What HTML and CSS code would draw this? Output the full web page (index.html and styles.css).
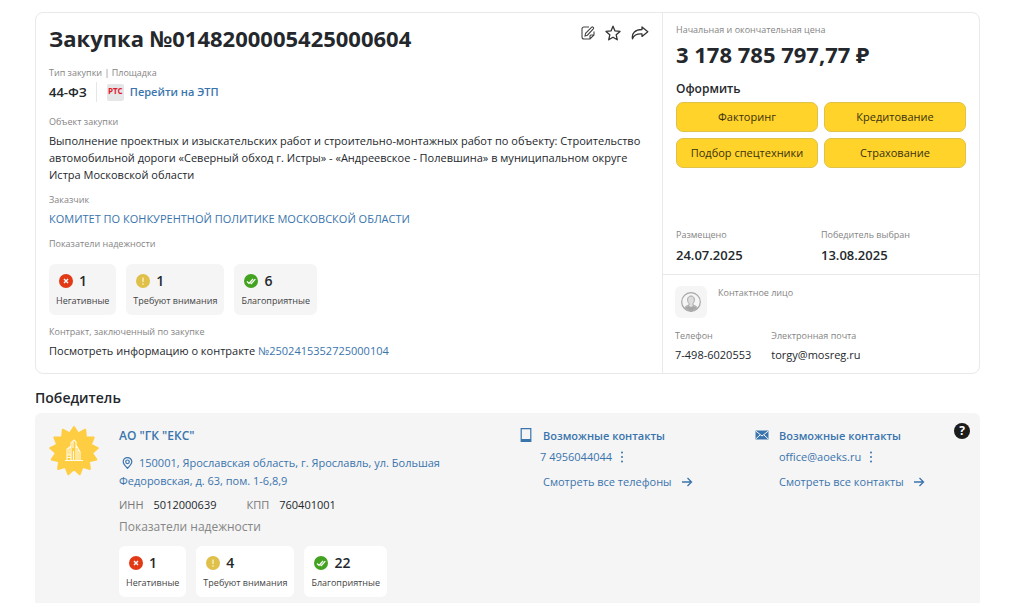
FILE: index.html
```html
<!DOCTYPE html>
<html lang="ru">
<head>
<meta charset="utf-8">
<meta name="viewport" content="width=device-width, initial-scale=1">
<title>Закупка №0148200005425000604</title>
<link rel="stylesheet" href="styles.css">
</head>
<body>
<svg class="sprite" aria-hidden="true">
  <symbol id="bad" viewBox="0 0 14 14"><circle cx="7" cy="7" r="7" fill="#e23a17"/><path d="M5 5l4 4M9 5l-4 4" stroke="#fff" stroke-width="1.4"/></symbol>
  <symbol id="warn" viewBox="0 0 14 14"><circle cx="7" cy="7" r="7" fill="#dfc04a"/><path d="M7 3.500v4.500M7 9.300v1.500" stroke="#fff3c4" stroke-width="1.300"/></symbol>
  <symbol id="good" viewBox="0 0 14 14"><circle cx="7" cy="7" r="7" fill="#43a320"/><path d="M3 7.500l2 2 4-4.500M6.500 9l.8.600 4-4.500" fill="none" stroke="#fff" stroke-width="1.200"/></symbol>
  <symbol id="arrow" viewBox="0 0 12 10"><path d="M1 5h9.500M6.500 1l4 4-4 4" fill="none" stroke="currentColor" stroke-width="1.300"/></symbol>
  <symbol id="dots" viewBox="0 0 4 12"><circle cx="2" cy="1.500" r="1"/><circle cx="2" cy="6" r="1"/><circle cx="2" cy="10.500" r="1"/></symbol>
</svg>
<main class="page">
  <section class="card">
    <div class="purchase">
      <header class="head">
        <h1 class="title">Закупка №0148200005425000604</h1>
        <div class="actions">
          <button class="icon-btn" type="button" aria-label="Заметка"><svg width="14" height="14" viewBox="0 0 14 14" fill="none" stroke="#444" stroke-width="1.100"><path d="M8 1H3Q1 1 1 3v8q0 2 2 2h6l4-4V5.500M9 13v-3q0-1 1-1h3"/><path d="M4 10l.600-2.700L10.700 1.200q.7-.6 1.500.1t.1 1.500L6.400 9.200z"/></svg></button>
          <button class="icon-btn" type="button" aria-label="В избранное"><svg width="16" height="16" viewBox="0 0 16 16" fill="none" stroke="#333" stroke-width="1.300" stroke-linejoin="round"><path d="M8 1.200l2 4.700 5 .5-3.800 3.400 1.100 5L8 12.200l-4.300 2.600 1.100-5L1 6.400l5-.5z"/></svg></button>
          <button class="icon-btn" type="button" aria-label="Поделиться"><svg width="18" height="14" viewBox="0 0 18 14" fill="none" stroke="#333" stroke-width="1.300" stroke-linejoin="round"><path d="M11 1l5.800 4.700L11 10.400V8C6 7.700 3 8.800 1.500 12.800 .4 7 4.500 3.600 11 3.500z"/></svg></button>
        </div>
      </header>
      <p class="label type-label">Тип закупки | Площадка</p>
      <div class="type">
        <strong class="law">44-ФЗ</strong>
        <span class="rts">РТС</span>
        <a class="etp" href="#">Перейти на ЭТП</a>
      </div>
      <p class="label object-label">Объект закупки</p>
      <p class="object">Выполнение проектных и изыскательских работ и строительно-монтажных работ по объекту: Строительство автомобильной дороги «Северный обход г. Истры» - «Андреевское - Полевшина» в муниципальном округе Истра Московской области</p>
      <p class="label customer-label">Заказчик</p>
      <a class="value" href="#">КОМИТЕТ ПО КОНКУРЕНТНОЙ ПОЛИТИКЕ МОСКОВСКОЙ ОБЛАСТИ</a>
      <p class="label rating-label">Показатели надежности</p>
      <div class="tiles">
        <div class="tile"><span class="count"><svg class="mark"><use href="#bad"/></svg>1</span><span class="caption">Негативные</span></div>
        <div class="tile"><span class="count"><svg class="mark"><use href="#warn"/></svg>1</span><span class="caption">Требуют внимания</span></div>
        <div class="tile"><span class="count"><svg class="mark"><use href="#good"/></svg>6</span><span class="caption">Благоприятные</span></div>
      </div>
      <p class="label contract-label">Контракт, заключенный по закупке</p>
      <p class="value">Посмотреть информацию о контракте <a href="#">№2502415352725000104</a></p>
    </div>
    <aside class="side">
      <div class="offer">
        <p class="label">Начальная и окончательная цена</p>
        <p class="price">3 178 785 797,77 ₽</p>
        <h2 class="subtitle">Оформить</h2>
        <div class="services">
          <button class="service" type="button">Факторинг</button>
          <button class="service" type="button">Кредитование</button>
          <button class="service" type="button">Подбор спецтехники</button>
          <button class="service" type="button">Страхование</button>
        </div>
        <div class="dates">
          <div><p class="label">Размещено</p><p class="date">24.07.2025</p></div>
          <div><p class="label">Победитель выбран</p><p class="date">13.08.2025</p></div>
        </div>
      </div>
      <div class="contact">
        <div class="person">
          <span class="avatar"><svg width="20" height="20" viewBox="0 0 20 20"><circle cx="10" cy="10" r="9.300" fill="none" stroke="#a6a6a6" stroke-width="1.200"/><path d="M3.500 16Q4 14 8 13.200V11.500C6 9.500 5.800 4 10 4s4 5.500 2 7.500v1.700q4 .8 4.500 2.800-6.500 5.500-13 0z" fill="#ddd" stroke="#a6a6a6"/><path d="M4 16q1-1.500 4-2l2 1 2-1q3 .5 4 2-6 4.800-12 0z" fill="#a6a6a6"/></svg></span>
          <p class="label">Контактное лицо</p>
        </div>
        <div class="channels">
          <div><p class="label">Телефон</p><p class="value">7-498-6020553</p></div>
          <div><p class="label">Электронная почта</p><p class="value">torgy@mosreg.ru</p></div>
        </div>
      </div>
    </aside>
  </section>

  <h2 class="section-title">Победитель</h2>
  <section class="winner">
    <svg class="badge" viewBox="-25 -25 50 50" aria-hidden="true">
      <path fill="#ffcd42" stroke="#ffcd42" stroke-width="2" stroke-linejoin="round" d="M0-24L4.300-17.500 11.200-21.300 11.900-13.600 19.700-13.600 16.800-6.400 23.800-2.900 17.900 2.200 22.400 8.500 14.900 10.300 15.900 18 8.500 15.900 5.700 23.300 0 18-5.700 23.300-8.500 15.900-15.900 18-14.900 10.300-22.400 8.500-17.900 2.200-23.800-2.900-16.800-6.400-19.700-13.600-11.900-13.600-11.200-21.300-4.300-17.500z"/>
      <path fill="none" stroke="#fffbe8" stroke-width="1.100" d="M-9 9.500H9M-7 9V-2L-3-5V9M-5-3V4M-3-5V-8L0-11 2-9V9M-1-9V-3M-.5 0V9M2-6L6 1V9M4-2V9M-7 4H-3M-7 6.500H-3"/>
    </svg>
    <div class="company">
      <a class="name" href="#">АО "ГК "ЕКС"</a>
      <a class="address" href="#"><svg class="pin" viewBox="0 0 10 12" fill="none" stroke="currentColor" stroke-width="1.200"><path d="M5 11.300C3 9 .7 7 .7 4.700a4.300 4.100 0 0 1 8.600 0C9.300 7 7 9 5 11.300z"/><circle cx="5" cy="4.800" r="1.800"/></svg>150001, Ярославская область, г. Ярославль, ул. Большая Федоровская, д. 63, пом. 1-6,8,9</a>
      <dl class="codes">
        <div class="code"><dt>ИНН</dt><dd>5012000639</dd></div>
        <div class="code"><dt>КПП</dt><dd>760401001</dd></div>
      </dl>
      <p class="rating-title">Показатели надежности</p>
      <div class="tiles tiles-white">
        <div class="tile"><span class="count"><svg class="mark"><use href="#bad"/></svg>1</span><span class="caption">Негативные</span></div>
        <div class="tile"><span class="count"><svg class="mark"><use href="#warn"/></svg>4</span><span class="caption">Требуют внимания</span></div>
        <div class="tile"><span class="count"><svg class="mark"><use href="#good"/></svg>22</span><span class="caption">Благоприятные</span></div>
      </div>
    </div>
    <div class="reach">
      <svg class="reach-icon" viewBox="0 0 14 14"><path d="M2.200.7h9.600v12.600H2.200z" fill="none" stroke="currentColor" stroke-width="1.200"/><path d="M2 11h10v2.200H2z" fill="currentColor"/></svg>
      <div class="reach-body">
        <h3 class="reach-title">Возможные контакты</h3>
        <p class="reach-value phone"><a href="#">7 4956044044</a><button class="more" type="button" aria-label="Ещё"><svg><use href="#dots"/></svg></button></p>
        <a class="reach-all" href="#">Смотреть все телефоны<svg class="arrow"><use href="#arrow"/></svg></a>
      </div>
    </div>
    <div class="reach">
      <svg class="reach-icon" viewBox="0 0 14 14"><path d="M.5 2.500h13v9H.5z" fill="currentColor"/><path d="M.7 3l6.300 5 6.300-5M.7 11l4.300-4M13.300 11L9 7" fill="none" stroke="#f5f5f5"/></svg>
      <div class="reach-body">
        <h3 class="reach-title">Возможные контакты</h3>
        <p class="reach-value"><a href="#">office@aoeks.ru</a><button class="more" type="button" aria-label="Ещё"><svg><use href="#dots"/></svg></button></p>
        <a class="reach-all" href="#">Смотреть все контакты<svg class="arrow"><use href="#arrow"/></svg></a>
      </div>
    </div>
    <button class="help" type="button" aria-label="Справка">?</button>
  </section>
</main>
</body>
</html>
```

FILE: styles.css
```css
* { box-sizing: border-box; }
body {
  margin: 0;
  background: #fff;
  color: #24282c;
  font: 11px/18px "Open Sans", "Noto Sans", sans-serif;
}
h1, h2, h3, p, dl, dd { margin: 0; }
a { color: #3a74ad; text-decoration: none; }
button { font: inherit; color: inherit; cursor: pointer; }
.sprite { position: absolute; width: 0; height: 0; }

.page { padding: 12px 44px 0 35px; }
.card {
  display: grid;
  grid-template-columns: minmax(0, 1fr) 317px;
  border: 1px solid #e9e9e9;
  border-radius: 8px;
}
.purchase { padding: 11px 13px 13px; }
.head { display: flex; justify-content: space-between; }
.title { font-size: 22px; line-height: 28px; font-weight: 700; }
.actions { display: flex; gap: 10px; height: 18px; align-items: center; }
.icon-btn { display: flex; padding: 0; border: 0; background: none; }

.label { color: #858585; font-size: 9px; line-height: 14px; }
.value { display: block; font-size: 11px; line-height: 18px; margin-top: 3px; }
.type-label { margin-top: 14px; }
.type { display: flex; align-items: center; margin-top: 2px; line-height: 20px; }
.law { font-size: 13px; font-weight: 600; padding-right: 9px; margin-right: 10px; border-right: 1px solid #e6e6e6; }
.rts {
  width: 17px; height: 17px; border-radius: 2px; margin-right: 6px;
  background: #e4e6e8; color: #e0182d;
  font-size: 8px; line-height: 14px; font-weight: 700; text-align: center;
}
.etp { font-weight: 600; }
.object-label { margin-top: 13px; }
.object { margin-top: 3px; line-height: 17px; }
.customer-label { margin-top: 10px; }
.rating-label { margin-top: 9px; }
.contract-label { margin-top: 10px; }

.tiles { display: flex; gap: 10px; margin-top: 13px; }
.tile {
  display: flex; flex-direction: column; gap: 4px;
  padding: 7px; border-radius: 6px; background: #f5f5f5;
}
.tiles-white .tile { background: #fff; }
.count { display: flex; align-items: center; gap: 6px; padding-left: 3px; font-size: 14px; line-height: 19px; font-weight: 600; }
.mark { width: 14px; height: 14px; }
.caption { font-size: 9px; line-height: 14px; color: #444; }

.side { display: flex; flex-direction: column; border-left: 1px solid #e9e9e9; }
.offer { flex: 1; display: flex; flex-direction: column; padding: 10px 13px; }
.price { font-size: 22px; line-height: 30px; font-weight: 700; margin-top: 2px; }
.subtitle { font-size: 12px; line-height: 18px; font-weight: 600; margin-top: 11px; }
.services { display: grid; grid-template-columns: 1fr 1fr; gap: 6px; margin-top: 4px; }
.service {
  height: 30px; padding: 0; border: 1px solid #e0c24a; border-radius: 7px;
  background: #ffd32a; color: #3a3210; font-size: 11px;
}
.dates { display: grid; grid-template-columns: 1fr 1fr; margin-top: auto; }
.date { font-size: 13px; line-height: 18px; font-weight: 600; margin-top: 4px; }
.contact { padding: 11px 12px 9px; border-top: 1px solid #e9e9e9; }
.person { display: flex; gap: 11px; }
.avatar { display: flex; align-items: center; justify-content: center; width: 32px; height: 32px; border-radius: 6px; background: #f5f5f5; }
.channels { display: flex; gap: 20px; margin-top: 11px; }

.section-title { font-size: 14px; line-height: 20px; font-weight: 600; margin: 14px 0 5px; }
.winner {
  display: grid; grid-template-columns: 50px 1fr 236px 199px 16px;
  align-items: start;
  padding: 13px 10px 20px 14px; border-radius: 6px; background: #f5f5f5;
}
.badge { width: 50px; height: 50px; }
.company { padding-left: 20px; max-width: 370px; }
.name { display: block; font-size: 12px; line-height: 20px; font-weight: 600; }
.address { display: block; line-height: 18px; margin-top: 8px; }
.pin { width: 11px; height: 12px; margin: 0 6px 0 3px; vertical-align: -2px; }
.codes { display: flex; gap: 30px; margin-top: 6px; line-height: 18px; }
.code { display: flex; gap: 10px; }
.code dt { color: #777; }
.rating-title { color: #858585; font-size: 12px; line-height: 18px; margin-top: 4px; }
.tiles-white { margin-top: 10px; }

.reach { display: flex; gap: 10px; color: #3a74ad; }
.reach-icon { width: 14px; height: 14px; margin-top: 2px; }
.reach-title { font-size: 11px; line-height: 20px; font-weight: 600; }
.reach-value { display: flex; align-items: center; gap: 8px; line-height: 20px; margin-top: 1px; }
.phone { margin-left: -3px; }
.more { padding: 0; border: 0; background: none; display: flex; }
.more svg { width: 4px; height: 12px; fill: #3a74ad; }
.reach-all { display: flex; align-items: center; gap: 9px; line-height: 20px; margin-top: 5px; white-space: nowrap; }
.arrow { width: 12px; height: 10px; }
.help {
  width: 16px; height: 16px; margin-top: -3px; padding: 0; border: 0; border-radius: 50%;
  background: #1c1c1c; color: #fff; font-size: 12px; line-height: 16px; font-weight: 700;
}
```
